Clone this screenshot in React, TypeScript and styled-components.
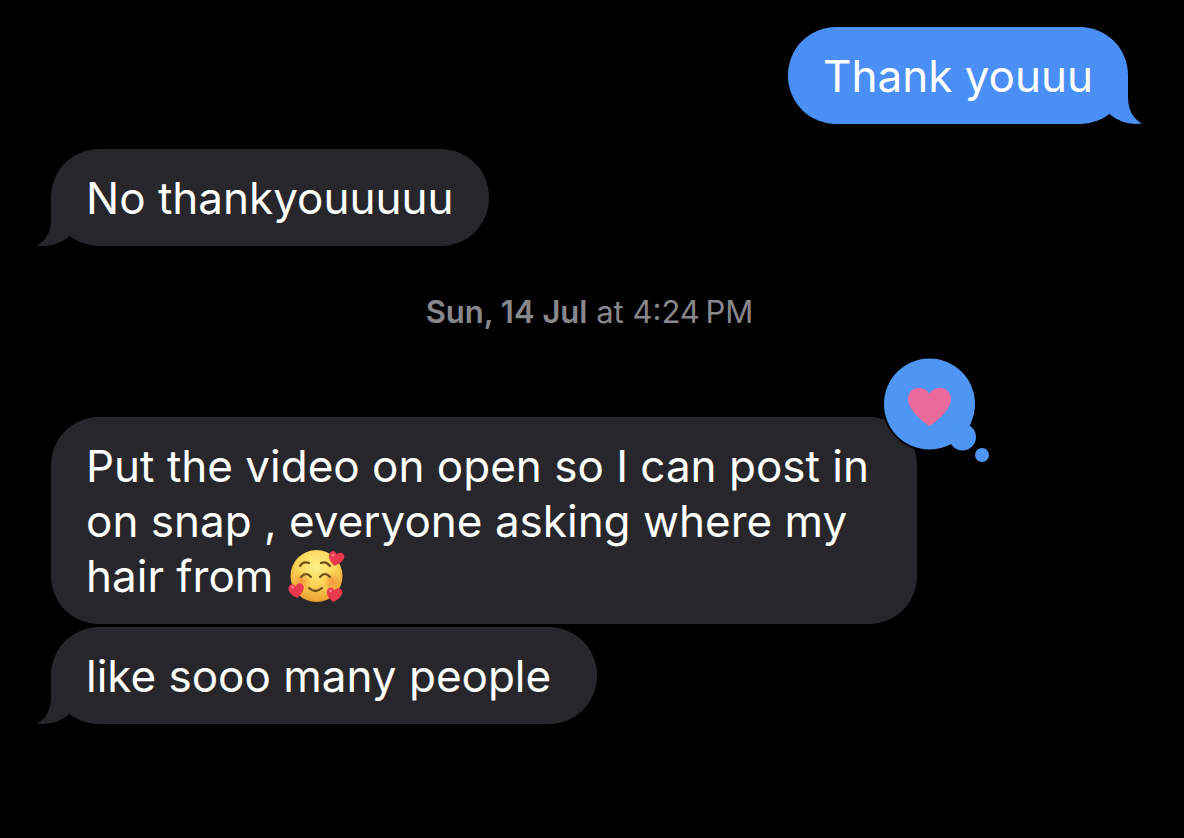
import React from "react";
import styled, { createGlobalStyle } from "styled-components";

const GlobalStyle = createGlobalStyle`
  * { box-sizing: border-box; }
  html, body { background: #000; }
  body {
    margin: 0;
    font-family: Inter, "Liberation Sans", sans-serif;
  }
`;

const BLUE = "#4a8ff5";
const GRAY = "#27272b";

const Thread = styled.main`
  display: flex;
  flex-direction: column;
  min-height: 100vh;
  padding: 27px 56px 40px 51px;
  background: #000;
`;

const Group = styled.section`
  display: flex;
  flex-direction: column;
  align-items: flex-start;
  gap: 3px;
`;

const Bubble = styled.div<{ $sent?: boolean; $roomy?: boolean }>`
  position: relative;
  align-self: ${(p) => (p.$sent ? "flex-end" : "flex-start")};
  max-width: 866px;
  padding: 22px ${(p) => (p.$roomy ? 46 : 35)}px 20px 35px;
  border-radius: 48px;
  background: ${(p) => (p.$sent ? BLUE : GRAY)};
  color: #fff;
`;

const Message = styled.p`
  margin: 0;
  font-size: 44px;
  line-height: 55px;
  font-weight: 400;
`;

const TailShape = styled.svg<{ $sent?: boolean }>`
  position: absolute;
  bottom: 0;
  ${(p) => (p.$sent ? "right: -14px; transform: scaleX(-1);" : "left: -14px;")}
  fill: ${(p) => (p.$sent ? BLUE : GRAY)};
`;

const Received = styled.div`
  margin-top: 25px;
`;

const Stamp = styled.time`
  align-self: center;
  margin: 48px 0 87px;
  color: #88888c;
  font-size: 31px;
  line-height: 36px;
`;

const StampDay = styled.span`
  font-weight: 600;
`;

const Tapback = styled.svg`
  position: absolute;
  top: -61px;
  right: -75px;
`;

const Emoji = styled.svg`
  margin-left: 2px;
  vertical-align: -11px;
`;

function Tail({ sent }: { sent?: boolean }) {
  return (
    <TailShape $sent={sent} width="44" height="48" viewBox="0 0 44 48" aria-hidden="true">
      <path d="M14 0V20C14 33 10 42 0 47.500C11 49 22 46.500 32 38.500L44 20V0Z" />
    </TailShape>
  );
}

function HeartTapback() {
  return (
    <Tapback width="110" height="110" viewBox="0 0 110 110" role="img" aria-label="Loved">
      <circle cx="47.500" cy="48" r="47.500" fill="#000" />
      <g fill="#4f96f4">
        <circle cx="47.500" cy="48" r="45.500" />
        <circle cx="80.500" cy="81" r="13.500" />
        <circle cx="100" cy="99" r="7" />
      </g>
      <path
        fill="#ea6a9b"
        d="M47.500 70C44.500 68.500 26 55 26 43C26 36.500 30.500 32 36.500 32C41.500 32 45.500 34 47.500 38C49.500 34 53.500 32 58.500 32C64.500 32 69 36.500 69 43C69 55 50.500 68.500 47.500 70Z"
      />
    </Tapback>
  );
}

const HEART = "M0 9C-3 7-9 3-8-3C-7-8-2-8 0-4C2-8 8-8 9-3C9 3 3 7 0 9Z";

function SmilingWithHearts() {
  return (
    <Emoji width="58" height="54" viewBox="0 0 58 54" role="img" aria-label="smiling face with hearts">
      <defs>
        <radialGradient id="face" cx="0.5" cy="0.3" r="0.72">
          <stop offset="0" stopColor="#fdf08a" />
          <stop offset="0.5" stopColor="#fbd557" />
          <stop offset="1" stopColor="#e99a2c" />
        </radialGradient>
        <radialGradient id="blush">
          <stop offset="0" stopColor="#f0762f" stopOpacity="0.6" />
          <stop offset="1" stopColor="#f0762f" stopOpacity="0" />
        </radialGradient>
      </defs>
      <circle cx="28.500" cy="27" r="26" fill="url(#face)" />
      <circle cx="14" cy="32" r="9" fill="url(#blush)" />
      <circle cx="44" cy="32" r="9" fill="url(#blush)" />
      <g fill="none" stroke="#70501a" strokeWidth="2.200" strokeLinecap="round">
        <path d="M12 17Q15 12 21 14" />
        <path d="M33 14Q38 12 42 17" />
        <path d="M13 28Q18 22 23 28" />
        <path d="M32 28Q37 22 42 28" />
        <path d="M21 39Q27.500 45 34 39" />
      </g>
      <g fill="#e8394d">
        <path transform="translate(48 9) rotate(12) scale(0.9)" d={HEART} />
        <path transform="translate(8 41) rotate(-8) scale(0.9)" d={HEART} />
        <path transform="translate(46 45) rotate(6) scale(0.9)" d={HEART} />
      </g>
      <g fill="#f77f88">
        <circle cx="45" cy="6" r="1.500" />
        <circle cx="4.500" cy="38" r="1.500" />
        <circle cx="42.500" cy="42" r="1.500" />
      </g>
    </Emoji>
  );
}

export default function App() {
  return (
    <>
      <GlobalStyle />
      <Thread>
        <Bubble $sent>
          <Message>Thank youuu</Message>
          <Tail sent />
        </Bubble>
        <Received>
          <Group>
            <Bubble>
              <Tail />
              <Message>No thankyouuuuu</Message>
            </Bubble>
          </Group>
        </Received>
        <Stamp dateTime="07-14T16:24">
          <StampDay>Sun, 14 Jul</StampDay> at 4:24{"\u2009"}PM
        </Stamp>
        <Group>
          <Bubble $roomy>
            <Message>
              Put the video on open so I can post in on snap , everyone asking where my hair from{" "}
              <SmilingWithHearts />
            </Message>
            <HeartTapback />
          </Bubble>
          <Bubble $roomy>
            <Tail />
            <Message>like sooo many people</Message>
          </Bubble>
        </Group>
      </Thread>
    </>
  );
}
